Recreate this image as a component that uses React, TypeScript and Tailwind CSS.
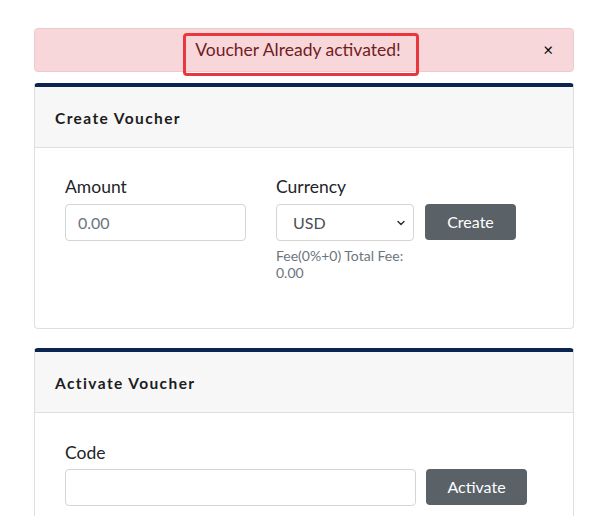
import { ChevronDown } from 'lucide-react'

export default function App() {
  return (
    <div className="w-[593px] h-[516px] overflow-hidden bg-white font-['Lato',sans-serif] text-[#212529]">
      <div className="ml-[34px] w-[540px] pt-[28px]">
        {/* alert */}
        <div className="relative h-[44px] rounded-[4px] border border-[#f5c6cb] bg-[#f8d7da] text-[#721c24] flex items-center justify-center pr-[12px]">
          <span className="text-[17.5px] leading-none">Voucher Already activated!</span>
          <span className="absolute right-[20px] top-[12px] text-[17px] leading-none text-black">×</span>
          <div className="absolute left-[148px] top-[4px] w-[236px] h-[43px] rounded-[4px] border-[3px] border-[#e8383d]" />
        </div>

        {/* create voucher */}
        <div className="mt-[11px] rounded-[4px] border border-[#dfdfdf] border-t-[4px] border-t-[#0b2550] overflow-hidden">
          <div className="h-[61px] bg-[#f7f7f7] border-b border-[#dfdfdf] flex items-center px-[20px] pt-[4px]">
            <h2 className="text-[15.5px] font-bold tracking-[1.4px] text-[#1c1c1c]">Create Voucher</h2>
          </div>
          <div className="px-[30px] pt-[28px] pb-[47px] flex items-start gap-[30px]">
            <div className="w-[181px]">
              <label className="block text-[17.5px] leading-[22px] mb-[6px]">Amount</label>
              <input
                placeholder="0.00"
                className="w-full h-[37px] rounded-[4px] border border-[#d5d5d5] px-[12px] text-[16px] placeholder:text-[#6c757d] outline-none"
              />
            </div>
            <div className="w-[138px]">
              <label className="block text-[17.5px] leading-[22px] mb-[6px]">Currency</label>
              <div className="relative h-[37px] rounded-[4px] border border-[#d5d5d5] flex items-center px-[16px] text-[16px] text-[#495057]">
                USD
                <ChevronDown className="absolute right-[6px] top-[12px] w-[12px] h-[12px] text-[#333]" strokeWidth={3} />
              </div>
              <p className="mt-[6px] text-[14px] leading-[17px] text-[#6c757d]">Fee(0%+0) Total Fee: 0.00</p>
            </div>
            <button className="mt-[28px] -ml-[19px] w-[91px] h-[36px] rounded-[4px] bg-[#5a6268] text-white text-[16px]">Create</button>
          </div>
        </div>

        {/* activate voucher */}
        <div className="mt-[19px] rounded-[4px] border border-[#dfdfdf] border-t-[4px] border-t-[#0b2550] overflow-hidden">
          <div className="h-[61px] bg-[#f7f7f7] border-b border-[#dfdfdf] flex items-center px-[20px] pt-[4px]">
            <h2 className="text-[15.5px] font-bold tracking-[1.4px] text-[#1c1c1c]">Activate Voucher</h2>
          </div>
          <div className="px-[30px] pt-[29px] pb-[30px] flex items-start gap-[10px]">
            <div className="w-[351px]">
              <label className="block text-[17.5px] leading-[22px] mb-[5px]">Code</label>
              <input className="w-full h-[37px] rounded-[4px] border border-[#d5d5d5] px-[12px] text-[16px] outline-none" />
            </div>
            <button className="mt-[27px] w-[101px] h-[36px] rounded-[4px] bg-[#5a6268] text-white text-[16px]">Activate</button>
          </div>
        </div>
      </div>
    </div>
  )
}
